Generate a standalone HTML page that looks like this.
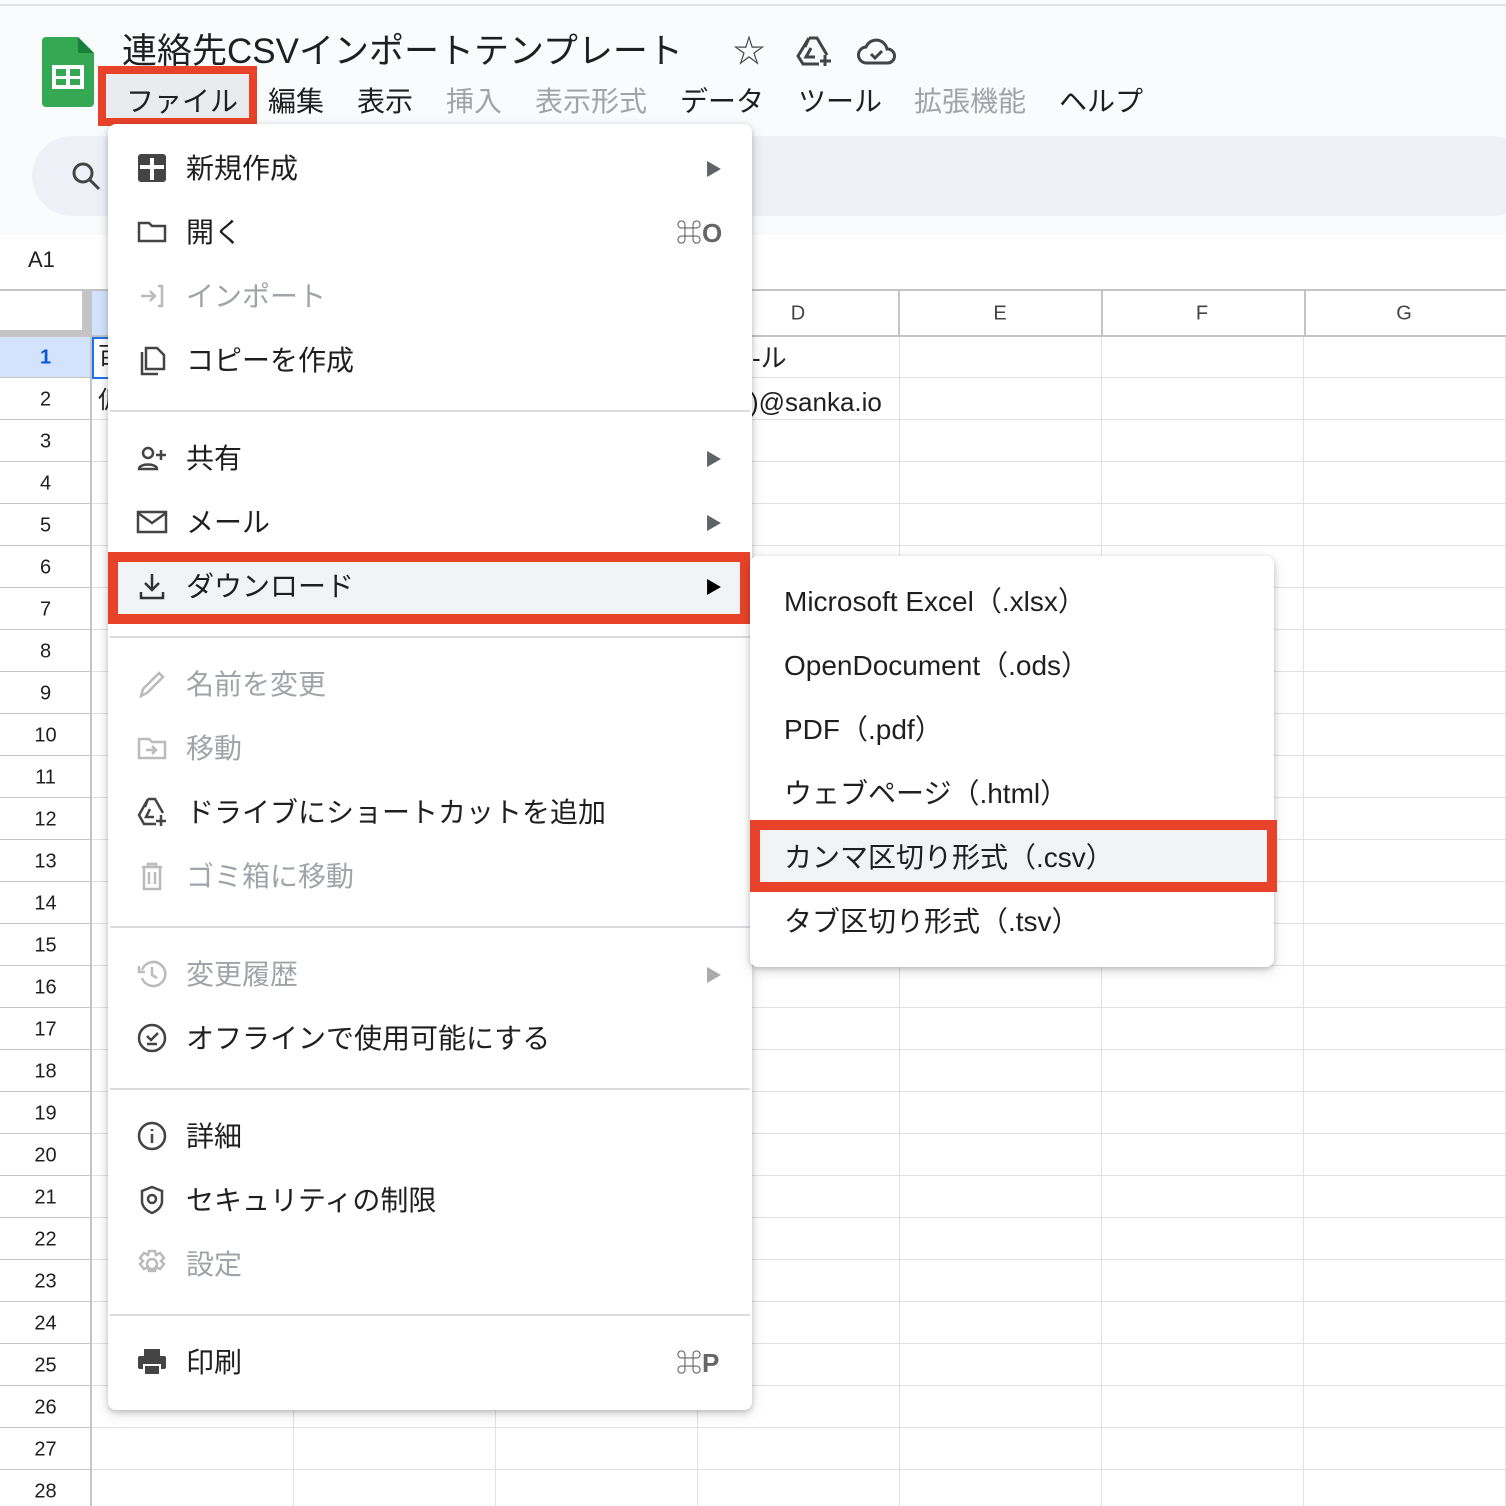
<!DOCTYPE html>
<html><head><meta charset="utf-8"><style>
*{margin:0;padding:0;box-sizing:border-box}
body{width:1506px;height:1502px;position:relative;overflow:hidden;background:#fff;font-family:"Liberation Sans","Noto Sans CJK JP",sans-serif;color:#1f1f1f}
.a{position:absolute}
.t{position:absolute;white-space:nowrap;line-height:1}
.mi{position:absolute;left:186px;font-size:28px;white-space:nowrap;line-height:1;transform:translateY(-50%);margin-top:1px}
.g{color:#a0a4a8}
.ic{position:absolute;left:136px;width:32px;height:32px;transform:translateY(-50%)}
.arr{position:absolute;left:705px;font-size:17px;color:#5f6368;transform:translateY(-50%)}
.sep{position:absolute;left:110px;width:640px;height:2px;background:#dadce0}
.sm{position:absolute;left:784px;font-size:28px;white-space:nowrap;line-height:1;transform:translateY(-50%);margin-top:1px}
.rn{position:absolute;left:0;width:91px;text-align:center;font-size:20px;color:#1f1f1f;transform:translateY(-50%);margin-top:2px}
.ch{position:absolute;top:314px;font-size:20px;color:#444;transform:translate(-50%,-50%)}
</style></head><body>
<div class="a" style="left:0;top:0;width:1506px;height:235px;background:#f9fbfd"></div>
<div class="a" style="left:0;top:4px;width:1506px;height:2px;background:#e3e3e3"></div>
<svg class="a" style="left:42px;top:37px" width="52" height="70" viewBox="0 0 52 70"><path d="M4 0h32l16 16v50a4 4 0 0 1-4 4H4a4 4 0 0 1-4-4V4a4 4 0 0 1 4-4z" fill="#34a853"/><path d="M36 0v16h16z" fill="#188038"/><rect x="10" y="28" width="32" height="24" fill="#fff"/><rect x="14" y="32" width="10" height="7" fill="#34a853"/><rect x="28" y="32" width="10" height="7" fill="#34a853"/><rect x="14" y="42" width="10" height="6" fill="#34a853"/><rect x="28" y="42" width="10" height="6" fill="#34a853"/></svg>
<div class="t" style="left:122px;top:34px;font-size:35px">連絡先CSVインポートテンプレート</div>
<div class="t" style="left:733px;top:35px;font-size:32px;color:#444">☆</div>
<svg class="a" style="left:795px;top:35px" width="40" height="32" viewBox="0 0 40 32" fill="none" stroke="#444" stroke-width="3"><path d="M14 3h8l10 17M14 3L3 21l5 8h16M14 3l-4 9M20 22h-9l5-9"/><path d="M30 20v11M25 26h11"/></svg>
<svg class="a" style="left:857px;top:36px" width="40" height="30" viewBox="0 0 40 30" fill="none" stroke="#444" stroke-width="3"><path d="M10 27a8 8 0 0 1-1-16 11 11 0 0 1 21 2 7 7 0 0 1 1 14z"/><path d="M14 18l4 4 7-7"/></svg>
<div class="a" style="left:98px;top:66px;width:159px;height:60px;border:8px solid #e8432a;background:#e9ebee"></div>
<div class="t" style="left:126px;top:88px;font-size:28px">ファイル</div>
<div class="t" style="left:268px;top:88px;font-size:28px">編集</div>
<div class="t" style="left:357px;top:88px;font-size:28px">表示</div>
<div class="t g" style="left:446px;top:88px;font-size:28px">挿入</div>
<div class="t g" style="left:535px;top:88px;font-size:28px">表示形式</div>
<div class="t" style="left:680px;top:88px;font-size:28px">データ</div>
<div class="t" style="left:798px;top:88px;font-size:28px">ツール</div>
<div class="t g" style="left:914px;top:88px;font-size:28px">拡張機能</div>
<div class="t" style="left:1059px;top:88px;font-size:28px">ヘルプ</div>
<div class="a" style="left:32px;top:136px;width:1500px;height:80px;border-radius:40px;background:#eef2f8"></div>
<svg class="a" style="left:70px;top:160px" width="32" height="32" viewBox="0 0 32 32" fill="none" stroke="#444" stroke-width="3"><circle cx="13" cy="13" r="9"/><path d="M20 20l9 9"/></svg>
<div class="t" style="left:28px;top:249px;font-size:22px">A1</div>
<div class="a" style="left:0;top:289px;width:1506px;height:2px;background:#c4c4c4"></div>
<div class="a" style="left:0;top:291px;background:#fff;border-right:9px solid #c4c4c4;border-bottom:7px solid #c4c4c4;width:91px;height:46px"></div>
<div class="a" style="left:91px;top:291px;width:20px;height:44px;background:#d3e3fd"></div>
<div class="a" style="left:91px;top:336px;width:1415px;height:1170px;background:
repeating-linear-gradient(to right,#e1e1e1 0 1px,transparent 1px 202px),
repeating-linear-gradient(to bottom,transparent 0 41px,#e1e1e1 41px 42px)"></div>
<div class="a" style="left:697px;top:291px;width:809px;height:44px;background:repeating-linear-gradient(to right,transparent 0 201px,#c4c4c4 201px 203px)"></div>
<div class="a" style="left:0;top:335px;width:1506px;height:2px;background:#c4c4c4"></div>
<div class="a" style="left:0;top:336px;width:91px;height:1170px;background:repeating-linear-gradient(to bottom,transparent 0 41px,#c4c4c4 41px 42px)"></div>
<div class="a" style="left:0;top:337px;width:91px;height:40px;background:#d3e3fd"></div>
<div class="a" style="left:90px;top:291px;width:2px;height:1215px;background:#c4c4c4"></div>
<div class="a" style="left:92px;top:337px;width:20px;height:42px;border:2px solid #1a73e8;border-right:none"></div>
<div class="t" style="left:98px;top:345px;font-size:24px">百</div>
<div class="t" style="left:98px;top:389px;font-size:24px">仮</div>
<div class="ch" style="left:798px">D</div><div class="ch" style="left:1000px">E</div><div class="ch" style="left:1202px">F</div><div class="ch" style="left:1404px">G</div>
<div class="t" style="left:752px;top:345px;font-size:26px">-ル</div>
<div class="t" style="left:750px;top:389px;font-size:26px">)@sanka.io</div>
<div class="rn" style="top:356px;font-weight:bold;color:#0b57d0">1</div>
<div class="rn" style="top:398px">2</div><div class="rn" style="top:440px">3</div><div class="rn" style="top:482px">4</div><div class="rn" style="top:524px">5</div><div class="rn" style="top:566px">6</div><div class="rn" style="top:608px">7</div><div class="rn" style="top:650px">8</div><div class="rn" style="top:692px">9</div><div class="rn" style="top:734px">10</div><div class="rn" style="top:776px">11</div><div class="rn" style="top:818px">12</div><div class="rn" style="top:860px">13</div><div class="rn" style="top:902px">14</div><div class="rn" style="top:944px">15</div><div class="rn" style="top:986px">16</div><div class="rn" style="top:1028px">17</div><div class="rn" style="top:1070px">18</div><div class="rn" style="top:1112px">19</div><div class="rn" style="top:1154px">20</div><div class="rn" style="top:1196px">21</div><div class="rn" style="top:1238px">22</div><div class="rn" style="top:1280px">23</div><div class="rn" style="top:1322px">24</div><div class="rn" style="top:1364px">25</div><div class="rn" style="top:1406px">26</div><div class="rn" style="top:1448px">27</div><div class="rn" style="top:1490px">28</div>
<div class="a" style="left:108px;top:124px;width:644px;height:1286px;background:#fff;border-radius:8px;box-shadow:0 2px 6px rgba(0,0,0,.2),0 4px 14px rgba(0,0,0,.12)"></div>
<svg class="ic" style="top:168px" viewBox="0 0 32 32"><rect x="2" y="2" width="28" height="28" rx="3" fill="#444"/><path d="M16 6v22M4 15h24" stroke="#fff" stroke-width="4"/></svg>
<div class="mi" style="top:168px">新規作成</div><div class="arr" style="top:168px">▶</div>
<svg class="ic" style="top:232px" viewBox="0 0 32 32" fill="none" stroke="#444" stroke-width="2.5"><path d="M3 7h10l3 3h13v15H3z"/></svg>
<div class="mi" style="top:232px">開く</div><div class="t" style="left:676px;top:220px;font-size:26px;color:#666;font-weight:bold">⌘O</div>
<svg class="ic" style="top:296px" viewBox="0 0 32 32" fill="none" stroke="#bbb" stroke-width="2.5"><path d="M5 16h14M14 11l5 5-5 5M22 6h4v20h-4"/></svg>
<div class="mi g" style="top:296px">インポート</div>
<svg class="ic" style="top:360px" viewBox="0 0 32 32" fill="none" stroke="#444" stroke-width="2.5"><path d="M10 4h11l7 7v14H10zM6 8v22h16"/></svg>
<div class="mi" style="top:360px">コピーを作成</div>
<div class="sep" style="top:410px"></div>
<svg class="ic" style="top:458px" viewBox="0 0 32 32" fill="none" stroke="#444" stroke-width="2.5"><circle cx="12" cy="11" r="5"/><path d="M3 27c0-6 18-6 18 0zM25 8v10M20 13h10"/></svg>
<div class="mi" style="top:458px">共有</div><div class="arr" style="top:458px">▶</div>
<svg class="ic" style="top:522px" viewBox="0 0 32 32" fill="none" stroke="#444" stroke-width="2.5"><rect x="2" y="6" width="28" height="20"/><path d="M2 7l14 10 14-10"/></svg>
<div class="mi" style="top:522px">メール</div><div class="arr" style="top:522px">▶</div>
<div class="a" style="left:108px;top:552px;width:642px;height:72px;border:10px solid #e8432a;background:#f1f3f4"></div>
<svg class="ic" style="top:586px" viewBox="0 0 32 32" fill="none" stroke="#333" stroke-width="2.5"><path d="M16 4v16M9 13l7 7 7-7M5 22v6h22v-6"/></svg>
<div class="mi" style="top:586px">ダウンロード</div><div class="arr" style="top:586px;color:#000">▶</div>
<div class="sep" style="top:636px"></div>
<svg class="ic" style="top:684px" viewBox="0 0 32 32" fill="none" stroke="#bbb" stroke-width="2.5"><path d="M5 28l2-7 16-16 4 4-16 16z"/></svg>
<div class="mi g" style="top:684px">名前を変更</div>
<svg class="ic" style="top:748px" viewBox="0 0 32 32" fill="none" stroke="#bbb" stroke-width="2.5"><path d="M3 7h10l3 3h13v16H3zM10 18h10M16 14l4 4-4 4"/></svg>
<div class="mi g" style="top:748px">移動</div>
<svg class="ic" style="top:812px" viewBox="0 0 32 32" fill="none" stroke="#444" stroke-width="2.5"><path d="M12 3h7l8 14M12 3L3 19l5 9h12M12 3l-3 8M18 21h-8l4-8"/><path d="M25 19v11M20 25h10"/></svg>
<div class="mi" style="top:812px">ドライブにショートカットを追加</div>
<svg class="ic" style="top:876px" viewBox="0 0 32 32" fill="none" stroke="#bbb" stroke-width="2.5"><path d="M6 7h20M12 7V4h8v3M8 7v22h16V7M13 12v12M19 12v12"/></svg>
<div class="mi g" style="top:876px">ゴミ箱に移動</div>
<div class="sep" style="top:926px"></div>
<svg class="ic" style="top:974px" viewBox="0 0 32 32" fill="none" stroke="#bbb" stroke-width="2.5"><path d="M6 12a12 12 0 1 1 0 8M3 8v6h6M16 9v8l5 3"/></svg>
<div class="mi g" style="top:974px">変更履歴</div><div class="arr" style="top:974px;color:#aaa">▶</div>
<svg class="ic" style="top:1038px" viewBox="0 0 32 32" fill="none" stroke="#444" stroke-width="2.5"><circle cx="16" cy="16" r="13"/><path d="M11 14l4 4 7-7M11 22h10"/></svg>
<div class="mi" style="top:1038px">オフラインで使用可能にする</div>
<div class="sep" style="top:1088px"></div>
<svg class="ic" style="top:1136px" viewBox="0 0 32 32" fill="none" stroke="#444" stroke-width="2.5"><circle cx="16" cy="16" r="13"/><path d="M16 14v9M16 9v2"/></svg>
<div class="mi" style="top:1136px">詳細</div>
<svg class="ic" style="top:1200px" viewBox="0 0 32 32" fill="none" stroke="#444" stroke-width="2.5"><path d="M16 3l10 4v10c0 6-5 10-10 12-5-2-10-6-10-12V7z"/><circle cx="16" cy="15" r="4"/></svg>
<div class="mi" style="top:1200px">セキュリティの制限</div>
<svg class="ic" style="top:1264px" viewBox="0 0 32 32" fill="none" stroke="#bbb" stroke-width="2.5"><circle cx="16" cy="16" r="5"/><path d="M13 3h6l1 4 4-2 4 5-3 3 3 3-4 5-4-2-1 4h-6l-1-4-4 2-4-5 3-3-3-3 4-5 4 2z"/></svg>
<div class="mi g" style="top:1264px">設定</div>
<div class="sep" style="top:1314px"></div>
<svg class="ic" style="top:1362px" viewBox="0 0 32 32"><rect x="8" y="3" width="16" height="7" fill="#444"/><rect x="2" y="10" width="28" height="13" rx="2" fill="#444"/><rect x="8" y="19" width="16" height="10" fill="#444" stroke="#fff" stroke-width="2"/></svg>
<div class="mi" style="top:1362px">印刷</div><div class="t" style="left:676px;top:1350px;font-size:26px;color:#666;font-weight:bold">⌘P</div>
<div class="a" style="left:750px;top:556px;width:524px;height:411px;background:#fff;border-radius:8px;box-shadow:0 2px 6px rgba(0,0,0,.2),0 4px 14px rgba(0,0,0,.12)"></div>
<div class="sm" style="top:601px">Microsoft Excel（.xlsx）</div>
<div class="sm" style="top:665px">OpenDocument（.ods）</div>
<div class="sm" style="top:729px">PDF（.pdf）</div>
<div class="sm" style="top:793px">ウェブページ（.html）</div>
<div class="a" style="left:750px;top:820px;width:527px;height:72px;border:10px solid #e8432a;background:#f1f3f4"></div>
<div class="sm" style="top:857px">カンマ区切り形式（.csv）</div>
<div class="sm" style="top:921px">タブ区切り形式（.tsv）</div>
</body></html>
